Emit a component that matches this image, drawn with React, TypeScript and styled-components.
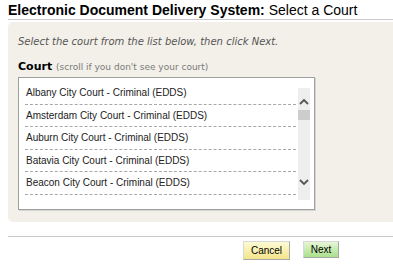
import styled, { createGlobalStyle } from "styled-components";

const GlobalStyle = createGlobalStyle`
  html, body {
    margin: 0;
    padding: 0;
    background: #ffffff;
    overflow: hidden;
  }
  body {
    font-family: "DejaVu Sans", Verdana, sans-serif;
    color: #000;
  }
`;

const courts = [
  "Albany City Court - Criminal (EDDS)",
  "Amsterdam City Court - Criminal (EDDS)",
  "Auburn City Court - Criminal (EDDS)",
  "Batavia City Court - Criminal (EDDS)",
  "Beacon City Court - Criminal (EDDS)",
];

const Page = styled.div`
  width: 400px;
  padding: 3px 0 0 8px;
`;

const Heading = styled.h1`
  margin: 0;
  padding-bottom: 1px;
  font-family: "Liberation Sans", Arial, sans-serif;
  font-size: 14px;
  font-weight: normal;
  line-height: 15px;
  border-bottom: 1px solid #c8c8c8;
  white-space: nowrap;

  b {
    font-weight: bold;
  }
`;

const Panel = styled.div`
  margin-top: 2px;
  background: #f3f0e9;
  border-radius: 5px;
  padding: 13px 10px 0 10px;
  box-sizing: border-box;
  height: 200px;
`;

const Intro = styled.p`
  margin: 0 0 12px 0;
  font-size: 10px;
  font-style: italic;
  color: #555;
  line-height: 13px;
`;

const FieldLabel = styled.div`
  font-size: 11px;
  font-weight: bold;
  line-height: 13px;
  margin-bottom: 3px;

  span {
    font-weight: normal;
    font-size: 9px;
    color: #7a7a7a;
  }
`;

const ListBox = styled.div`
  width: 297px;
  height: 133px;
  box-sizing: border-box;
  background: #fff;
  border: 1px solid #a0a0a0;
  box-shadow: 1px 1px 0 #d4d4d4;
  display: flex;
  padding: 4px 4px 0 6px;
  overflow: hidden;
`;

const Items = styled.div`
  flex: 1;
  display: flex;
  flex-direction: column;
`;

const Item = styled.div`
  font-family: "Liberation Sans", Arial, sans-serif;
  font-size: 10px;
  line-height: 21.5px;
  padding-left: 1px;
  border-bottom: 1px dashed #a8a8a8;
  color: #222;
  white-space: nowrap;
  overflow: hidden;
`;

const ScrollTrack = styled.div`
  width: 12px;
  margin: 6px 0 9px 2px;
  background: #eeeeee;
  display: flex;
  flex-direction: column;
  align-items: center;
`;

const Chevron = styled.svg<{ $top: number }>`
  margin-top: ${(p) => p.$top}px;
`;

const Thumb = styled.div`
  width: 12px;
  height: 10px;
  margin-top: 5px;
  background: #cdcdcd;
`;

const Footer = styled.div`
  margin-top: 14px;
  border-top: 1px solid #c8c8c8;
  padding: 4px 0 0 235px;
  display: flex;
  align-items: flex-start;
  gap: 13px;
`;

const Button = styled.button<{ $variant: "cancel" | "next" }>`
  font-family: "Liberation Sans", Arial, sans-serif;
  font-size: 10px;
  color: #000;
  width: ${(p) => (p.$variant === "cancel" ? 47 : 36)}px;
  height: ${(p) => (p.$variant === "cancel" ? 19 : 17)}px;
  padding: 0;
  border: 1px solid #d8d8d8;
  border-right-color: #a8a8a8;
  border-bottom-color: #a8a8a8;
  background: ${(p) =>
    p.$variant === "cancel"
      ? "linear-gradient(#fdfbd6, #f3e58a)"
      : "linear-gradient(#e6f6d6, #a9e08c)"};
  cursor: pointer;
`;

export default function App() {
  return (
    <Page>
      <GlobalStyle />
      <Heading>
        <b>Electronic Document Delivery System:</b> Select a Court
      </Heading>
      <Panel>
        <Intro>Select the court from the list below, then click Next.</Intro>
        <FieldLabel>
          Court <span>(scroll if you don't see your court)</span>
        </FieldLabel>
        <ListBox>
          <Items>
            {courts.map((c) => (
              <Item key={c}>{c}</Item>
            ))}
          </Items>
          <ScrollTrack>
            <Chevron $top={10} width="10" height="7" viewBox="0 0 10 7">
              <path d="M1 6 L5 2 L9 6" fill="none" stroke="#555" strokeWidth="1.8" />
            </Chevron>
            <Thumb />
            <Chevron $top={59} width="10" height="7" viewBox="0 0 10 7">
              <path d="M1 1 L5 5 L9 1" fill="none" stroke="#555" strokeWidth="1.8" />
            </Chevron>
          </ScrollTrack>
        </ListBox>
      </Panel>
      <Footer>
        <Button $variant="cancel">Cancel</Button>
        <Button $variant="next">Next</Button>
      </Footer>
    </Page>
  );
}
